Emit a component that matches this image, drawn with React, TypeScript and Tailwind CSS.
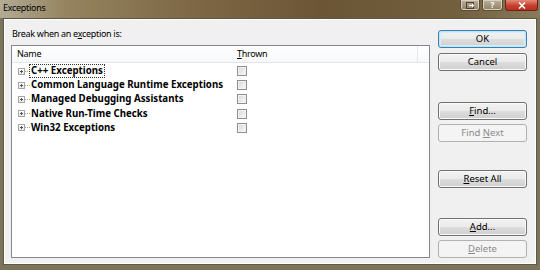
import React from 'react';

const font = { fontFamily: '"Noto Sans", "Open Sans", sans-serif' };

const rows = [
  'C++ Exceptions',
  'Common Language Runtime Exceptions',
  'Managed Debugging Assistants',
  'Native Run-Time Checks',
  'Win32 Exceptions',
];

interface BtnProps {
  children: React.ReactNode;
  disabled?: boolean;
  isDefault?: boolean;
  className?: string;
}

const WinButton: React.FC<BtnProps> = ({ children, disabled, isDefault, className = '' }) => {
  let look =
    'border-[#707070] bg-[linear-gradient(#f2f2f2_0%,#ebebeb_48%,#dddddd_52%,#cfcfcf_100%)] shadow-[inset_0_0_0_1px_#fbfbfb] text-black';
  if (isDefault) {
    look =
      'border-[#3c7fb1] bg-[linear-gradient(#f2f2f2_0%,#ebebeb_48%,#dddddd_52%,#cfcfcf_100%)] shadow-[inset_0_0_0_1px_#bfe6f7,inset_0_0_0_2px_#d6eefa] text-black';
  }
  if (disabled) {
    look = 'border-[#adb2b5] bg-[#f4f4f4] text-[#8b8b8b]';
  }
  return (
    <div
      className={`w-[89px] h-[18px] rounded-[3px] border flex items-center justify-center text-[9.5px] leading-none ${look} ${className}`}
    >
      <span>{children}</span>
    </div>
  );
};

const ExpandBox = () => (
  <div className="flex items-center w-[12px] shrink-0">
    <div className="w-[7px] h-[7px] border border-[#a5a5a5] bg-[linear-gradient(#ffffff,#e6e6e6)] relative shrink-0">
      <div className="absolute left-[1px] top-[2px] w-[3px] h-px bg-[#555]" />
      <div className="absolute left-[2px] top-[1px] w-px h-[3px] bg-[#555]" />
    </div>
    <div className="w-[5px] border-t border-dotted border-[#a0a0a0]" />
  </div>
);

const CheckBox = () => (
  <div className="w-[10px] h-[10px] border border-[#8f8f8f] bg-[linear-gradient(135deg,#d6d6d6,#fbfbfb)] shadow-[inset_0_0_0_1px_#f2f2f2]" />
);

export default function App() {
  return (
    <div className="w-[540px] h-[270px] overflow-hidden flex flex-col bg-[#7b745d]" style={font}>
      {/* Title bar */}
      <div className="h-[18px] shrink-0 flex items-start bg-[linear-gradient(90deg,#b3ab96_0%,#95845f_12%,#7e6845_35%,#6b5535_60%,#72603f_85%,#8a7a5c_100%)]">
        <span className="pl-[3px] pt-[2px] text-[9px] tracking-[-0.3px] leading-[12px] text-black">Exceptions</span>
        <div className="ml-auto flex gap-[2px] mr-[2px]">
          <div className="w-[20px] h-[11px] rounded-b-[3px] border border-t-0 border-[#5a4c36] bg-[linear-gradient(#bdb19a,#8f7f62)] shadow-[inset_0_0_0_1px_#d8cfbe] flex items-center justify-center">
            <svg width="9" height="7" viewBox="0 0 9 7">
              <rect x="0.5" y="0.5" width="7" height="6" fill="none" stroke="#4a4030" />
              <path d="M3 3.5h5M6 2l2 1.5-2 1.5" stroke="#fff" strokeWidth="1" fill="none" />
            </svg>
          </div>
          <div className="w-[21px] h-[11px] rounded-b-[3px] border border-t-0 border-[#5a4c36] bg-[linear-gradient(#bdb19a,#8f7f62)] shadow-[inset_0_0_0_1px_#d8cfbe] flex items-center justify-center text-[8px] leading-none font-bold text-white">
            ?
          </div>
          <div className="w-[33px] h-[11px] rounded-b-[3px] border border-t-0 border-[#6b2218] bg-[linear-gradient(#e08a7a,#c7402c_55%,#b8301e)] flex items-center justify-center">
            <svg width="8" height="7" viewBox="0 0 8 7">
              <path d="M1 0.5l6 6M7 0.5l-6 6" stroke="#fff" strokeWidth="1.6" />
            </svg>
          </div>
        </div>
      </div>

      {/* Client area */}
      <div className="flex-1 mx-[3px] mb-[5px] border border-[#5e5947] flex">
        <div className="flex-1 border border-white bg-[#f0f0f0] flex">
          {/* Left column */}
          <div className="flex flex-col pl-[6px] pt-[8px] pb-[5px]">
            <div className="text-[9px] tracking-[-0.3px] leading-[12px] text-black pl-[1px]">
              Break when an e<span className="underline">x</span>ception is:
            </div>
            <div className="mt-[5px] w-[419px] flex-1 border border-[#828790] bg-white flex flex-col">
              <div className="h-[17px] flex items-center text-[9px] tracking-[-0.3px] text-black border-b border-[#e3e6ea] bg-[linear-gradient(#ffffff,#f7f8f9)] relative">
                <span className="pl-[5px] w-[225px]">Name</span>
                <span>
                  <span className="underline">T</span>hrown
                </span>
                <div className="absolute left-[405px] top-0 h-full border-l border-[#e3e6ea]" />
              </div>
              <div className="pt-[1px] flex flex-col">
                {rows.map((r, i) => (
                  <div key={r} className="h-[14.2px] flex items-center">
                    <div className="pl-[6px] w-[225px] flex items-center">
                      <ExpandBox />
                      <span
                        className={`text-[9.7px] font-bold leading-[12px] text-black px-[1px] ${
                          i === 0 ? 'outline outline-1 outline-dotted outline-[#333]' : ''
                        }`}
                      >
                        {r}
                      </span>
                    </div>
                    <CheckBox />
                  </div>
                ))}
              </div>
            </div>
          </div>

          {/* Right column: buttons */}
          <div className="flex flex-col pl-[8px] pt-[10px]">
            <WinButton isDefault>OK</WinButton>
            <WinButton className="mt-[5px]">Cancel</WinButton>
            <WinButton className="mt-[31px]">
              <span className="underline">F</span>ind...
            </WinButton>
            <WinButton disabled className="mt-[4px]">
              Find <span className="underline">N</span>ext
            </WinButton>
            <WinButton className="mt-[28px]">
              <span className="underline">R</span>eset All
            </WinButton>
            <WinButton className="mt-[30px]">
              <span className="underline">A</span>dd...
            </WinButton>
            <WinButton disabled className="mt-[4px]">
              <span className="underline">D</span>elete
            </WinButton>
          </div>
        </div>
      </div>
    </div>
  );
}
